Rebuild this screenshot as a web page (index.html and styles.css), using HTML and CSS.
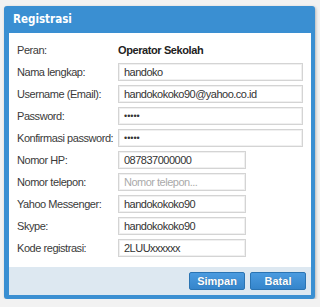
FILE: index.html
```html
<!DOCTYPE html>
<html>
<head>
<meta charset="utf-8">
<link rel="stylesheet" href="styles.css">
</head>
<body>
<div class="dialog">
  <div class="header">Registrasi</div>
  <div class="inner">
    <div class="content">
      <div class="row"><span class="label">Peran:</span><span class="value">Operator Sekolah</span></div>
      <div class="row"><span class="label">Nama lengkap:</span><div class="input long">handoko</div></div>
      <div class="row"><span class="label">Username (Email):</span><div class="input long">handokokoko90@yahoo.co.id</div></div>
      <div class="row"><span class="label">Password:</span><div class="input long pw">•••••</div></div>
      <div class="row"><span class="label">Konfirmasi password:</span><div class="input long pw">•••••</div></div>
      <div class="row"><span class="label">Nomor HP:</span><div class="input short">087837000000</div></div>
      <div class="row"><span class="label">Nomor telepon:</span><div class="input short ph">Nomor telepon...</div></div>
      <div class="row"><span class="label">Yahoo Messenger:</span><div class="input short">handokokoko90</div></div>
      <div class="row"><span class="label">Skype:</span><div class="input short">handokokoko90</div></div>
      <div class="row"><span class="label">Kode registrasi:</span><div class="input short">2LUUxxxxxx</div></div>
    </div>
    <div class="footer">
      <button class="btn">Simpan</button>
      <button class="btn">Batal</button>
    </div>
  </div>
</div>
</body>
</html>
```
FILE: styles.css
```css
html, body {
  margin: 0;
  padding: 0;
  background: #f2f2f2;
}
body {
  padding: 6px 0 0 4px;
  font-family: "Liberation Sans", Arial, sans-serif;
}
.dialog {
  width: 311px;
  background: #3a8fd2;
  border-radius: 3px;
  box-shadow: 1px 1px 3px rgba(0,0,0,0.25);
}
.header {
  height: 27px;
  line-height: 27px;
  padding-left: 9px;
  color: #fff;
  font-family: "DejaVu Sans Condensed", "DejaVu Sans", sans-serif;
  font-weight: bold;
  font-size: 11.5px;
}
.inner {
  padding: 0 4px 4px 5px;
}
.content {
  background: #fff;
  padding: 8px 0 10px 8px;
  display: flex;
  flex-direction: column;
  gap: 4px;
}
.row {
  display: flex;
  align-items: center;
  height: 18px;
}
.label {
  width: 101px;
  flex-shrink: 0;
  white-space: nowrap;
  font-size: 11px;
  letter-spacing: -0.45px;
  color: #3a3a3a;
}
.value {
  font-size: 11px;
  font-weight: bold;
  letter-spacing: -0.4px;
  color: #222;
}
.input {
  box-sizing: border-box;
  height: 18px;
  border: 1px solid #d4d4d4;
  box-shadow: inset 0 0 0 1px #f0f0f0;
  padding-left: 5px;
  font-size: 11px;
  letter-spacing: -0.5px;
  line-height: 16px;
  color: #333;
  white-space: nowrap;
  overflow: hidden;
}
.long { width: 185px; }
.short { width: 128px; }
.pw { font-size: 9px; letter-spacing: 0; }
.ph { color: #aaa; }
.footer {
  background: #dde8f1;
  height: 28px;
  display: flex;
  justify-content: flex-end;
  align-items: center;
  gap: 5px;
  padding-right: 5px;
}
.btn {
  width: 56px;
  height: 18px;
  padding: 0;
  border: 1px solid #2a74b3;
  border-radius: 2px;
  background: linear-gradient(#4a9be0, #3585cb);
  color: #fff;
  font-family: "Liberation Sans", Arial, sans-serif;
  font-weight: bold;
  font-size: 11px;
  text-shadow: 0 0 1px rgba(0,0,0,0.3);
}
```
